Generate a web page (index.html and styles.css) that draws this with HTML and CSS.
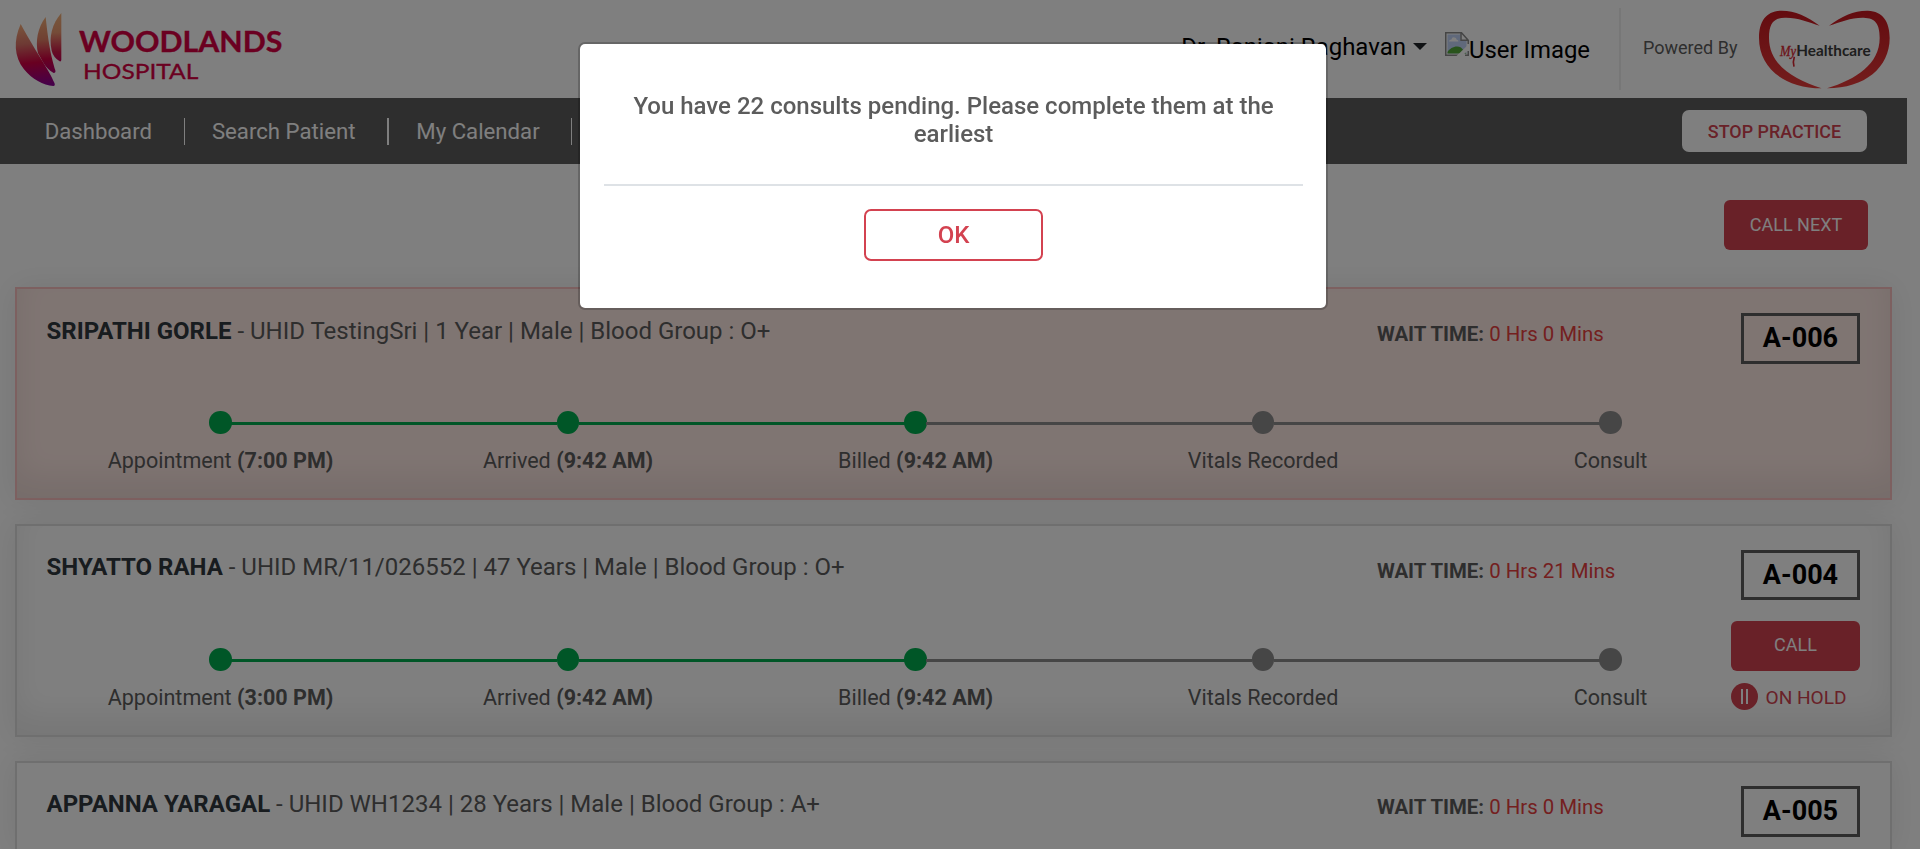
FILE: index.html
```html
<!DOCTYPE html>
<html lang="en">
<head>
<meta charset="utf-8">
<title>Woodlands Hospital</title>
<link rel="stylesheet" href="styles.css">
</head>
<body>
<header class="header">
  <svg class="brand" width="300" height="98" viewBox="0 0 900 294" role="img" aria-label="Woodlands Hospital">
    <defs>
      <linearGradient id="petal" gradientUnits="userSpaceOnUse" x1="90" y1="75" x2="110" y2="257">
        <stop offset="0" stop-color="#f3a878"/><stop offset=".3" stop-color="#dc7468"/><stop offset=".62" stop-color="#d20042"/><stop offset="1" stop-color="#8c0094"/>
      </linearGradient>
      <linearGradient id="petal2" gradientUnits="userSpaceOnUse" x1="130" y1="50" x2="140" y2="220">
        <stop offset="0" stop-color="#f3b078"/><stop offset=".4" stop-color="#e08064"/><stop offset=".75" stop-color="#d20042"/><stop offset="1" stop-color="#a80070"/>
      </linearGradient>
      <linearGradient id="petal3" gradientUnits="userSpaceOnUse" x1="170" y1="38" x2="174" y2="185">
        <stop offset="0" stop-color="#f0b078"/><stop offset=".4" stop-color="#ea9870"/><stop offset=".8" stop-color="#cc1848"/><stop offset="1" stop-color="#c00058"/>
      </linearGradient>
    </defs>
    <path fill="url(#petal)" d="M62 72C40 122 42 170 72 208C96 238 130 256 160 258Q167 257 163 248C148 212 116 170 62 72Z"/>
    <path fill="url(#petal2)" d="M137 51C112 85 106 125 114 160C128 182 134 204 161 219Q168 219 166 211C156 178 146 140 137 51Z"/>
    <path fill="url(#petal3)" d="M184 39C156 72 146 110 155 152Q160 172 179 184Q184 185 184 179Z"/>
    <text class="brand-name" x="237" y="156" textLength="610" lengthAdjust="spacingAndGlyphs">WOODLANDS</text>
    <text class="brand-sub" x="249" y="236" textLength="346" lengthAdjust="spacingAndGlyphs">HOSPITAL</text>
  </svg>
  <div class="account">
    <span class="doctor">Dr. Ranjani Raghavan</span>
    <span class="caret"></span>
    <span class="user-image">
      <svg width="24" height="24" viewBox="0 0 24 24">
        <path fill="#fff" d="M1 1H16L23 8V23H1Z"/>
        <path fill="#c0d2f6" d="M2.500 2.500H15.500V9H21.500V21.500H2.500Z"/>
        <path fill="#fff" d="M4 9.500Q4 7.500 6.500 7.500Q7 4.500 9.500 5.500Q11.500 5.500 11.500 7.500Q13.500 8 13.500 9.500Z"/>
        <path fill="#52a838" d="M2.500 20C5 16 11 13 16 15.500L21.500 21.500H2.500Z"/>
        <path fill="none" stroke="#8a8a8a" stroke-width="1.500" d="M23.250 12V8.300L16.500 .75H.75V23.250H13M16 1V8.300H23M20 23.250H23.250V19"/>
        <path fill="#fff" d="M24 12L11.500 24H17L24 17.500Z"/>
      </svg><span>User Image</span>
    </span>
  </div>
  <div class="powered">
    <span>Powered By</span>
    <svg width="131" height="79" viewBox="478 28 393 237" role="img" aria-label="MyHealthcare">
      <defs><linearGradient id="heart" x1="0" y1="0" x2="0" y2="1"><stop offset="0" stop-color="#c81820"/><stop offset="1" stop-color="#e83c3a"/></linearGradient></defs>
      <path fill="url(#heart)" d="M660 75C622 46 584 29 543 30C499 32 478 62 478 112C478 200 552 263 666 263C578 236 508 190 508 112C508 69 521 52 556 51C592 50 626 64 660 75Z"/>
      <path fill="url(#heart)" d="M688 75C726 46 764 29 805 30C849 32 870 62 870 112C870 200 796 263 682 263C770 236 840 190 840 112C840 69 827 52 792 51C756 50 722 64 688 75Z"/>
      <text class="logo-my" x="541" y="166" textLength="48" lengthAdjust="spacingAndGlyphs">My</text>
      <path fill="none" stroke="#d92630" stroke-width="5" d="M584 168Q579 182 583 198"/>
      <text class="logo-health" x="590" y="165" textLength="223" lengthAdjust="spacingAndGlyphs">Healthcare</text>
    </svg>
  </div>
</header>

<nav class="nav">
  <a class="nav-link">Dashboard</a>
  <a class="nav-link wide">Search Patient</a>
  <a class="nav-link">My Calendar</a>
  <button class="stop">STOP PRACTICE</button>
</nav>

<main class="main">
  <div class="toolbar"><button class="btn next">CALL NEXT</button></div>

  <section class="card alert">
    <div class="info"><p class="patient"><b>SRIPATHI GORLE</b> - UHID TestingSri | 1 Year | Male | Blood Group : O+</p>
      <p class="wait"><b>WAIT TIME:</b> <span>0 Hrs 0 Mins</span></p></div>
    <ol class="steps">
      <li class="done">Appointment <b>(7:00 PM)</b></li><li class="done">Arrived <b>(9:42 AM)</b></li><li class="done">Billed <b>(9:42 AM)</b></li><li>Vitals Recorded</li><li>Consult</li>
    </ol>
    <aside class="side"><div class="token">A-006</div></aside>
  </section>

  <section class="card">
    <div class="info"><p class="patient"><b>SHYATTO RAHA</b> - UHID MR/11/026552 | 47 Years | Male | Blood Group : O+</p>
      <p class="wait"><b>WAIT TIME:</b> <span>0 Hrs 21 Mins</span></p></div>
    <ol class="steps">
      <li class="done">Appointment <b>(3:00 PM)</b></li><li class="done">Arrived <b>(9:42 AM)</b></li><li class="done">Billed <b>(9:42 AM)</b></li><li>Vitals Recorded</li><li>Consult</li>
    </ol>
    <aside class="side"><div class="token">A-004</div><button class="btn call">CALL</button>
      <div class="hold"><i class="pause"></i><span>ON HOLD</span></div></aside>
  </section>

  <section class="card last">
    <div class="info"><p class="patient"><b>APPANNA YARAGAL</b> - UHID WH1234 | 28 Years | Male | Blood Group : A+</p>
      <p class="wait"><b>WAIT TIME:</b> <span>0 Hrs 0 Mins</span></p></div>
    <aside class="side"><div class="token">A-005</div></aside>
  </section>
</main>

<div class="backdrop">
  <div class="modal" role="dialog">
    <p class="message">You have 22 consults pending. Please complete them at the earliest</p>
    <button class="ok">OK</button>
  </div>
</div>
</body>
</html>
```
FILE: styles.css
```css
* { box-sizing: border-box; }
body { margin: 0; height: 849px; overflow: hidden; background: #fff; color: #5c5c5c; font-family: Roboto, sans-serif; }
p, ol { margin: 0; padding: 0; }
button { font-family: inherit; padding: 0; }
svg { display: block; flex: none; }

.header { display: flex; height: 98px; align-items: flex-start; }
.brand-name { font: 700 88px Lato, sans-serif; fill: #d60042; stroke: #d60042; stroke-width: 1px; }
.brand-sub { font: 400 66px Lato, sans-serif; fill: #d60042; stroke: #d60042; stroke-width: 1px; }
.account { display: flex; margin-left: auto; padding-top: 32px; font-size: 24px; line-height: 28px; color: #000; }
.doctor { padding-top: 1px; white-space: nowrap; }
.caret { margin: 11px 18px 0 7px; height: 7px; border: 7px solid transparent; border-top-color: #212529; border-bottom: 0; }
.user-image { display: flex; width: 146px; font-size: 23.900px; white-space: nowrap; }
.user-image span { margin: 4px 0 0 0; }
.powered { display: flex; height: 82px; margin: 8px 30px 0 28px; border-left: 2px solid #eee; padding-left: 22px; }
.powered > span { width: 116px; padding-top: 28px; line-height: 24px; font-size: 18px; white-space: nowrap; }
.powered svg { margin-top: 2px; }
.logo-my { font: italic 400 46px "Liberation Serif", serif; fill: #d92630; stroke: #d92630; stroke-width: 1px; }
.logo-health { font: 700 47px Lato, sans-serif; fill: #3c3c3c; }

.nav { display: flex; align-items: center; width: 1907px; height: 66px; padding: 0 40px 0 17.500px; background: #5c5c5c; color: #fff; font-size: 22.200px; }
.nav-link { height: 27px; padding: 0 31.700px 0 27.200px; border-right: 1px solid #fff; line-height: 26px; white-space: nowrap; }
.nav-link.wide { border-right-width: 2px; }
.stop { width: 185px; height: 42px; margin-left: auto; border: 0; border-radius: 7px; background: #fff; color: #d34250; font-size: 17.900px; font-weight: 500; }

.main { height: 685px; padding: 0 28px 0 15px; overflow: hidden; }
.toolbar { display: flex; justify-content: flex-end; height: 123.330px; padding: 36px 24px 0 0; }
.btn { display: block; height: 50px; padding-bottom: 2px; border: 0; border-radius: 6px; background: #d34250; color: #fff; font-size: 18px; }
.next { width: 144px; }

.card { display: grid; grid-template-columns: 1737px 1fr; grid-template-rows: 98px 1fr; height: 213px; margin-bottom: 23.670px; padding: 0 30px 0 29.500px; border: 2px solid #dfdfdf; background: #fff; box-shadow: 0 0 30px rgba(0, 0, 0, .08), inset 0 -20px 30px rgba(0, 0, 0, .07); }
.card.alert { border-color: #fbc0c0; background: #ffeae5; }
.card.last { height: 88.330px; margin-bottom: 0; border-bottom: 0; grid-template-rows: 1fr; box-shadow: 0 0 30px rgba(0, 0, 0, .08); }
.info { display: grid; grid-template-columns: 1330.500px 1fr; grid-column: 1; }
.patient { padding-top: 27.200px; font-size: 24px; line-height: 28px; white-space: nowrap; }
.patient b { color: #31383e; }
.wait { padding-top: 32.670px; font-size: 20.400px; line-height: 24px; white-space: nowrap; }
.wait span { color: #e8403e; }
.steps { display: grid; grid-template-columns: repeat(5, 347.500px); grid-column: 1; grid-row: 2; height: 80px; padding-top: 24px; padding-left: .3px; list-style: none; font-size: 21.550px; line-height: 28px; text-align: center; }
.steps li { position: relative; white-space: nowrap; }
.steps li::before { content: ""; display: block; width: 22.670px; height: 22.670px; margin: 0 auto 13.500px; border-radius: 50%; background: #8d8d8d; }
.steps li.done::before { background: #00ad4e; }
.steps li + li::after { content: ""; position: absolute; top: 11px; right: calc(50% + 11px); width: 326px; height: 3px; background: #8d8d8d; }
.steps li.done + li.done::after { background: #00ad4e; }
.side { display: flex; flex-direction: column; align-items: flex-end; grid-column: 2; grid-row: 1 / -1; padding-top: 23.670px; margin-left: -60px; }
.token { width: 119px; height: 50.670px; flex: none; border: 3px solid #5c5c5c; color: #000; font-size: 27px; font-weight: 700; line-height: 44px; text-align: center; }
.call { width: 129px; margin-top: 20.670px; flex: none; }
.hold { display: flex; align-items: center; width: 129px; margin-top: 12.500px; color: #d34250; font-size: 19.100px; white-space: nowrap; }
.hold span { padding-top: 2px; }
.pause { display: flex; justify-content: center; align-items: center; width: 27px; height: 27px; margin-right: 7.500px; border-radius: 50%; background: #d34250; }
.pause::before { content: ""; width: 3px; height: 15px; border: solid #fff; border-width: 0 2px; }

.backdrop { position: fixed; inset: 0; display: flex; justify-content: center; align-items: flex-start; padding: 42px 14px 0 0; background: rgba(0, 0, 0, .5); }
.modal { width: 750px; height: 268px; padding: 45px 23px 0 24px; border: 2px solid rgba(0, 0, 0, .2); border-radius: 7px; background: #fff; background-clip: padding-box; text-align: center; }
.message { height: 97px; padding: 3px 20px 0; font-size: 24px; font-weight: 500; line-height: 28px; border-bottom: 2px solid #dee2e6; }
.ok { width: 179px; height: 52px; margin-top: 23px; border: 2px solid #d34250; border-radius: 7px; background: #fff; color: #d34250; font-size: 24px; font-weight: 500; }
```
